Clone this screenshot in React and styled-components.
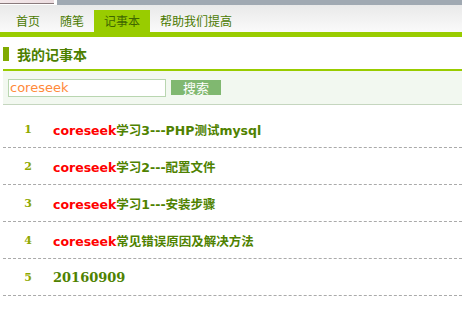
import React from "react";
import styled, { createGlobalStyle } from "styled-components";

const GlobalStyle = createGlobalStyle`
  html, body {
    margin: 0;
    padding: 0;
    background: #fff;
    font-family: "DejaVu Sans", "Noto Sans CJK SC", sans-serif;
  }
`;

const tabs = ["首页", "随笔", "记事本", "帮助我们提高"];

const notes = [
  { n: 1, key: "coreseek", rest: "学习3---PHP测试mysql" },
  { n: 2, key: "coreseek", rest: "学习2---配置文件" },
  { n: 3, key: "coreseek", rest: "学习1---安装步骤" },
  { n: 4, key: "coreseek", rest: "常见错误原因及解决方法" },
  { n: 5, key: "", rest: "20160909", plain: true },
];

export default function App() {
  return (
    <Page>
      <GlobalStyle />
      <TopStrip>
        <Banner />
        <Gap />
        <Shade />
      </TopStrip>
      <Nav>
        {tabs.map((t, i) => (
          <Tab key={t} active={i === 2}>
            {t}
          </Tab>
        ))}
      </Nav>
      <Section>
        <Heading>
          <Marker />
          我的记事本
        </Heading>
        <SearchPanel>
          <SearchInput defaultValue="coreseek" />
          <SearchButton>搜索</SearchButton>
        </SearchPanel>
        <List>
          {notes.map((item) => (
            <Row key={item.n}>
              <Num>{item.n}</Num>
              <Title plain={item.plain}>
                {item.key && <Hit>{item.key}</Hit>}
                {item.rest}
              </Title>
            </Row>
          ))}
        </List>
      </Section>
    </Page>
  );
}

const Page = styled.div`
  width: 462px;
  height: 313px;
  overflow: hidden;
`;

const TopStrip = styled.div`
  display: flex;
  height: 5px;
`;
const Banner = styled.div`
  width: 54px;
  height: 3px;
  background: linear-gradient(90deg, #f4e8ea, #ecdde0);
  border-bottom: 1px solid #8a7a7c;
`;
const Gap = styled.div`
  width: 3px;
  background: #fff;
`;
const Shade = styled.div`
  flex: 1;
  background: #a0a9b2;
`;

const Nav = styled.div`
  display: flex;
  align-items: flex-end;
  height: 27px;
  padding-left: 6px;
  background: linear-gradient(#e9e9e9, #fafafa);
  border-bottom: 5px solid #99cc00;
`;
const Tab = styled.div`
  height: 22px;
  line-height: 22px;
  padding: 0 10px;
  font-size: 12px;
  color: ${(p) => (p.active ? "#3f6600" : "#4a7a00")};
  background: ${(p) => (p.active ? "#99cc00" : "transparent")};
  font-family: "Noto Sans CJK SC", sans-serif;
`;

const Section = styled.div`
  padding: 0 0 0 3px;
`;

const Heading = styled.div`
  display: flex;
  align-items: center;
  gap: 8px;
  height: 31px;
  margin-top: 1px;
  font-size: 14px;
  font-weight: bold;
  color: #4d7f00;
  font-family: "Noto Sans CJK SC", sans-serif;
  border-bottom: 2px solid #99cc00;
`;
const Marker = styled.span`
  width: 6px;
  height: 14px;
  background: #80aa00;
`;

const SearchPanel = styled.div`
  display: flex;
  align-items: center;
  gap: 5px;
  height: 33px;
  padding-left: 5px;
  background: #f2f8f0;
  border-bottom: 1px solid #c5d6bf;
`;
const SearchInput = styled.input`
  box-sizing: border-box;
  width: 158px;
  height: 18px;
  padding: 0 1px;
  border: 1px solid #b9d6b0;
  background: #fff;
  color: #ff8a3a;
  font-size: 13px;
  font-family: "DejaVu Sans", sans-serif;
  outline: none;
`;
const SearchButton = styled.button`
  width: 50px;
  height: 15px;
  padding: 0;
  border: none;
  background: #80b870;
  color: #fff;
  font-size: 13px;
  line-height: 15px;
  font-family: "Noto Sans CJK SC", sans-serif;
`;

const List = styled.div`
  padding-top: 6px;
`;
const Row = styled.div`
  display: flex;
  align-items: center;
  height: 36px;
  border-bottom: 1px dashed #aaaaaa;
`;
const Num = styled.span`
  width: 50px;
  text-align: center;
  font-family: "DejaVu Serif", serif;
  font-size: 11px;
  font-weight: bold;
  color: #8fa800;
`;
const Title = styled.span`
  font-size: ${(p) => (p.plain ? "13px" : "12.5px")};
  font-weight: bold;
  color: #4f8200;
  font-family: ${(p) =>
    p.plain
      ? `"DejaVu Serif", serif`
      : `"DejaVu Sans", "Noto Sans CJK SC", sans-serif`};
`;
const Hit = styled.span`
  color: #ff0000;
`;
